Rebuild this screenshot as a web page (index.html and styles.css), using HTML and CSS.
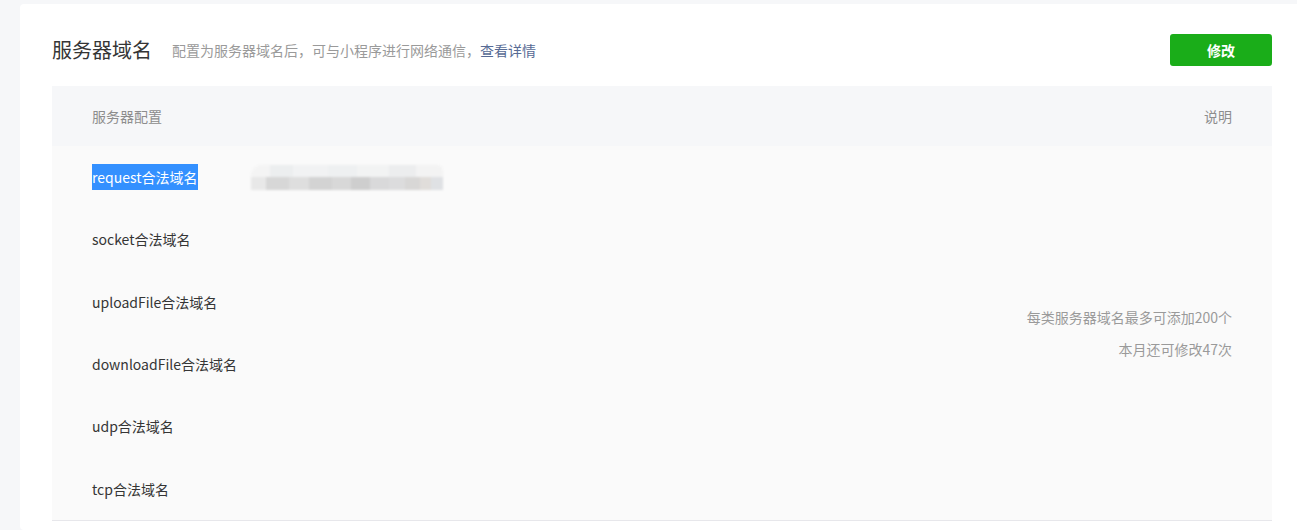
FILE: index.html
```html
<!DOCTYPE html>
<html lang="zh-CN">
<head>
<meta charset="utf-8">
<title>服务器域名</title>
<link rel="stylesheet" href="styles.css">
</head>
<body>
<div class="card">
  <div class="head">
    <div class="head-text">
      <h2 class="title">服务器域名</h2>
      <span class="desc">配置为服务器域名后，可与小程序进行网络通信，<a class="link" href="#">查看详情</a></span>
    </div>
    <button class="btn">修改</button>
  </div>
  <div class="table">
    <div class="thead">
      <span>服务器配置</span>
      <span>说明</span>
    </div>
    <div class="tbody">
      <div class="rows">
        <div class="row"><span class="sel">request合法域名</span><span class="blur"><span class="blur-top"></span><span class="blur-bot"></span></span></div>
        <div class="row">socket合法域名</div>
        <div class="row">uploadFile合法域名</div>
        <div class="row">downloadFile合法域名</div>
        <div class="row">udp合法域名</div>
        <div class="row">tcp合法域名</div>
      </div>
      <div class="note">
        <p>每类服务器域名最多可添加200个</p>
        <p>本月还可修改47次</p>
      </div>
    </div>
  </div>
</div>
</body>
</html>
```

FILE: styles.css
```css
html, body {
  margin: 0;
  padding: 0;
}
body {
  background: #f6f7f9;
  font-family: "Noto Sans CJK SC", "Noto Sans", sans-serif;
  font-size: 14px;
  color: #353535;
  overflow: hidden;
  height: 530px;
  padding: 4px 0 0 20px;
  box-sizing: border-box;
}
.card {
  width: 1284px;
  height: 526px;
  background: #fff;
  border-radius: 4px;
  padding: 30px 32px 0 32px;
  box-sizing: border-box;
}
.head {
  display: flex;
  align-items: center;
  justify-content: space-between;
  height: 32px;
  margin-bottom: 20px;
}
.head-text {
  display: flex;
  align-items: center;
}
.title {
  margin: 0;
  font-size: 20px;
  font-weight: 400;
  color: #353535;
  line-height: 32px;
}
.desc {
  margin-left: 20px;
  font-size: 14px;
  color: #9a9a9a;
}
.link {
  color: #576b95;
  text-decoration: none;
}
.btn {
  width: 102px;
  height: 32px;
  border: 0;
  border-radius: 3px;
  background: #1aad19;
  color: #fff;
  font-family: inherit;
  font-size: 14px;
  font-weight: 700;
  padding: 0;
}
.table {
  border-bottom: 1px solid #e7e7eb;
}
.thead {
  display: flex;
  justify-content: space-between;
  align-items: center;
  height: 60px;
  padding: 0 40px;
  background: #f6f7f9;
  color: #8d8d8d;
}
.tbody {
  display: flex;
  justify-content: space-between;
  height: 374px;
  padding: 0 40px;
  background: #fafafa;
}
.rows {
  display: flex;
  flex-direction: column;
}
.row {
  flex: 1;
  display: flex;
  align-items: center;
}
.sel {
  display: inline-block;
  background: #3390ff;
  color: #fff;
  line-height: 26px;
}
.blur {
  display: inline-flex;
  flex-direction: column;
  margin-left: 53px;
  width: 192px;
  height: 25px;
  filter: blur(1px);
  border-radius: 10px 6px 0 0;
  overflow: hidden;
}
.blur-top {
  height: 12px;
  background: linear-gradient(90deg, #f4f4f4 0 10%, #eceeef 10% 22%, #f1f2f3 22% 40%, #eef0f1 40% 55%, #f2f3f3 55% 72%, #ecedee 72% 86%, #f3f3f3 86% 100%);
}
.blur-bot {
  height: 13px;
  background: linear-gradient(90deg, #e8e8e8 0 8%, #d7d7d7 8% 20%, #dedede 20% 30%, #d3d3d3 30% 42%, #d8d8d8 42% 52%, #cecece 52% 62%, #d9d9da 62% 72%, #dcdcdd 72% 80%, #d8d7d6 80% 88%, #e0ddda 88% 94%, #dfe1e4 94% 100%);
}
.note {
  display: flex;
  flex-direction: column;
  justify-content: center;
  align-items: flex-end;
  color: #9a9a9a;
}
.note p {
  margin: 0;
  line-height: 32px;
}
```
